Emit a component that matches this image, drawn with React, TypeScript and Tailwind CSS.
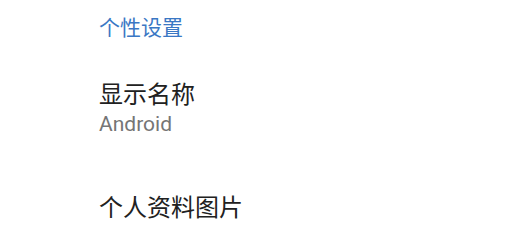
export default function App() {
  return (
    <div
      className="w-[519px] h-[242px] bg-white overflow-hidden pl-[99px]"
      style={{ fontFamily: 'Roboto, "Noto Sans CJK SC", sans-serif' }}
    >
      <div className="pt-[13px] h-[56px] text-[21px] leading-[30px] text-[#3a77c4]">个性设置</div>
      <div className="pt-[23px] h-[136px]">
        <div className="text-[24px] leading-[32px] text-[#212121]">显示名称</div>
        <div className="text-[21px] leading-[26px] text-[#757575]">Android</div>
      </div>
      <div className="text-[24px] leading-[32px] text-[#212121]">个人资料图片</div>
    </div>
  );
}
